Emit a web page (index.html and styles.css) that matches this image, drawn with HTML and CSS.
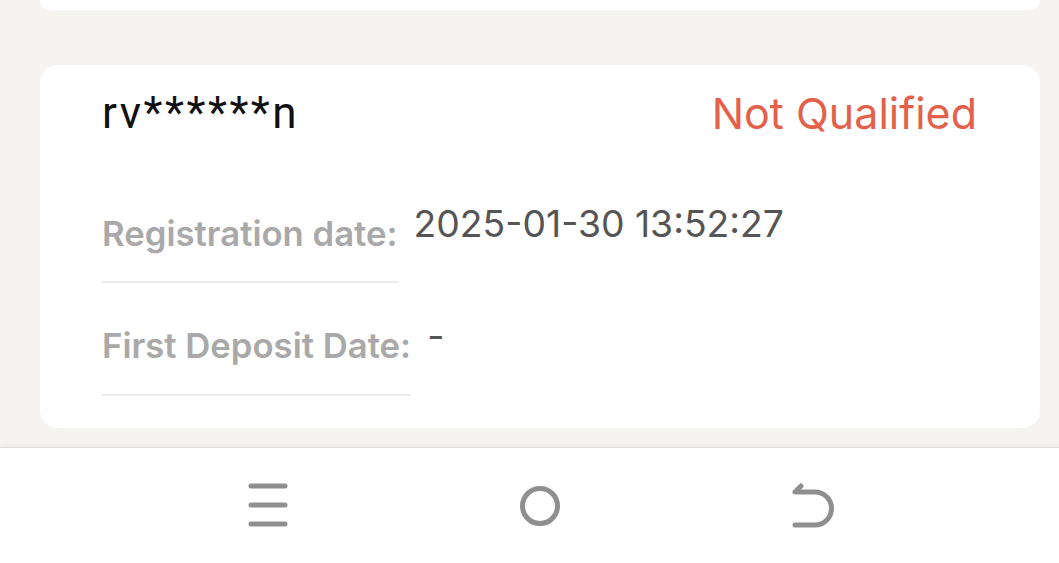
FILE: index.html
```html
<!DOCTYPE html>
<html lang="en">
<head>
    <meta charset="UTF-8">
    <meta name="viewport" content="width=device-width, initial-scale=1.0">
    <title>Invitation records</title>
    <link rel="stylesheet" href="styles.css">
</head>
<body>
    <div class="list">
        <div class="card card-prev"></div>

        <div class="card">
            <div class="card-head">
                <span class="user">rv******n</span>
                <span class="status">Not Qualified</span>
            </div>
            <div class="details">
                <div class="row">
                    <div class="label">Registration date:</div>
                    <div class="value">2025-01-30 13:52:27</div>
                </div>
                <div class="row">
                    <div class="label">First Deposit Date:</div>
                    <div class="value">-</div>
                </div>
            </div>
        </div>
    </div>

    <div class="navbar">
        <svg class="nav-icon" viewBox="0 0 44 48" width="44" height="48">
            <path d="M5 4H39M5 23H39M5 42H39" />
        </svg>
        <svg class="nav-icon" viewBox="0 0 44 48" width="44" height="48">
            <circle cx="22" cy="24" r="17.5" />
        </svg>
        <svg class="nav-icon" viewBox="0 0 44 48" width="44" height="48">
            <path d="M11 4L5 10H25A16.5 16.5 0 0 1 25 43H5" />
        </svg>
    </div>
</body>
</html>
```

FILE: styles.css
```css
html, body{
    margin:0;
    height:100%;
}
body{
    display:flex;
    flex-direction:column;
    background:#f5f4f0;
    font-family:Inter, Roboto, "Liberation Sans", Arial, sans-serif;
    overflow:hidden;
}
.list{
    flex:1;
    display:flex;
    flex-direction:column;
    gap:55px;
    padding:0 19px 0 40px;
}
.card{
    background:#fff;
    border-radius:18px;
    padding:20px 63px 32px 62px;
}
.card-prev{
    height:10px;
    padding:0;
    border-radius:0 0 18px 18px;
}
.card-head{
    display:flex;
    justify-content:space-between;
    align-items:center;
    height:56px;
    font-size:43px;
}
.user{
    font-family:Roboto, "Liberation Sans", Arial, sans-serif;
    font-size:44px;
    color:#111;
    letter-spacing:2.5px;
}
.status{
    color:#e3614a;
}
.details{
    margin-top:30px;
}
.row{
    display:flex;
    align-items:flex-start;
    gap:16px;
}
.label{
    padding:41px 0 27px;
    border-bottom:2px solid #ebebeb;
    font-size:34.7px;
    line-height:42px;
    font-weight:600;
    color:#a9a9a9;
    white-space:nowrap;
}
.row + .row .label{
    padding-bottom:28px;
}
.value{
    padding-top:30px;
    font-size:37.3px;
    line-height:46px;
    color:#555;
}
.navbar{
    height:115px;
    flex:none;
    display:flex;
    justify-content:center;
    align-items:center;
    gap:228px;
    padding-left:21px;
    background:#fff;
    border-top:1px solid #dedede;
    box-shadow:0 -3px 8px rgba(0,0,0,0.04);
}
.nav-icon{
    fill:none;
    stroke:#8f8f8f;
    stroke-width:5;
    stroke-linecap:round;
    stroke-linejoin:round;
}
```
